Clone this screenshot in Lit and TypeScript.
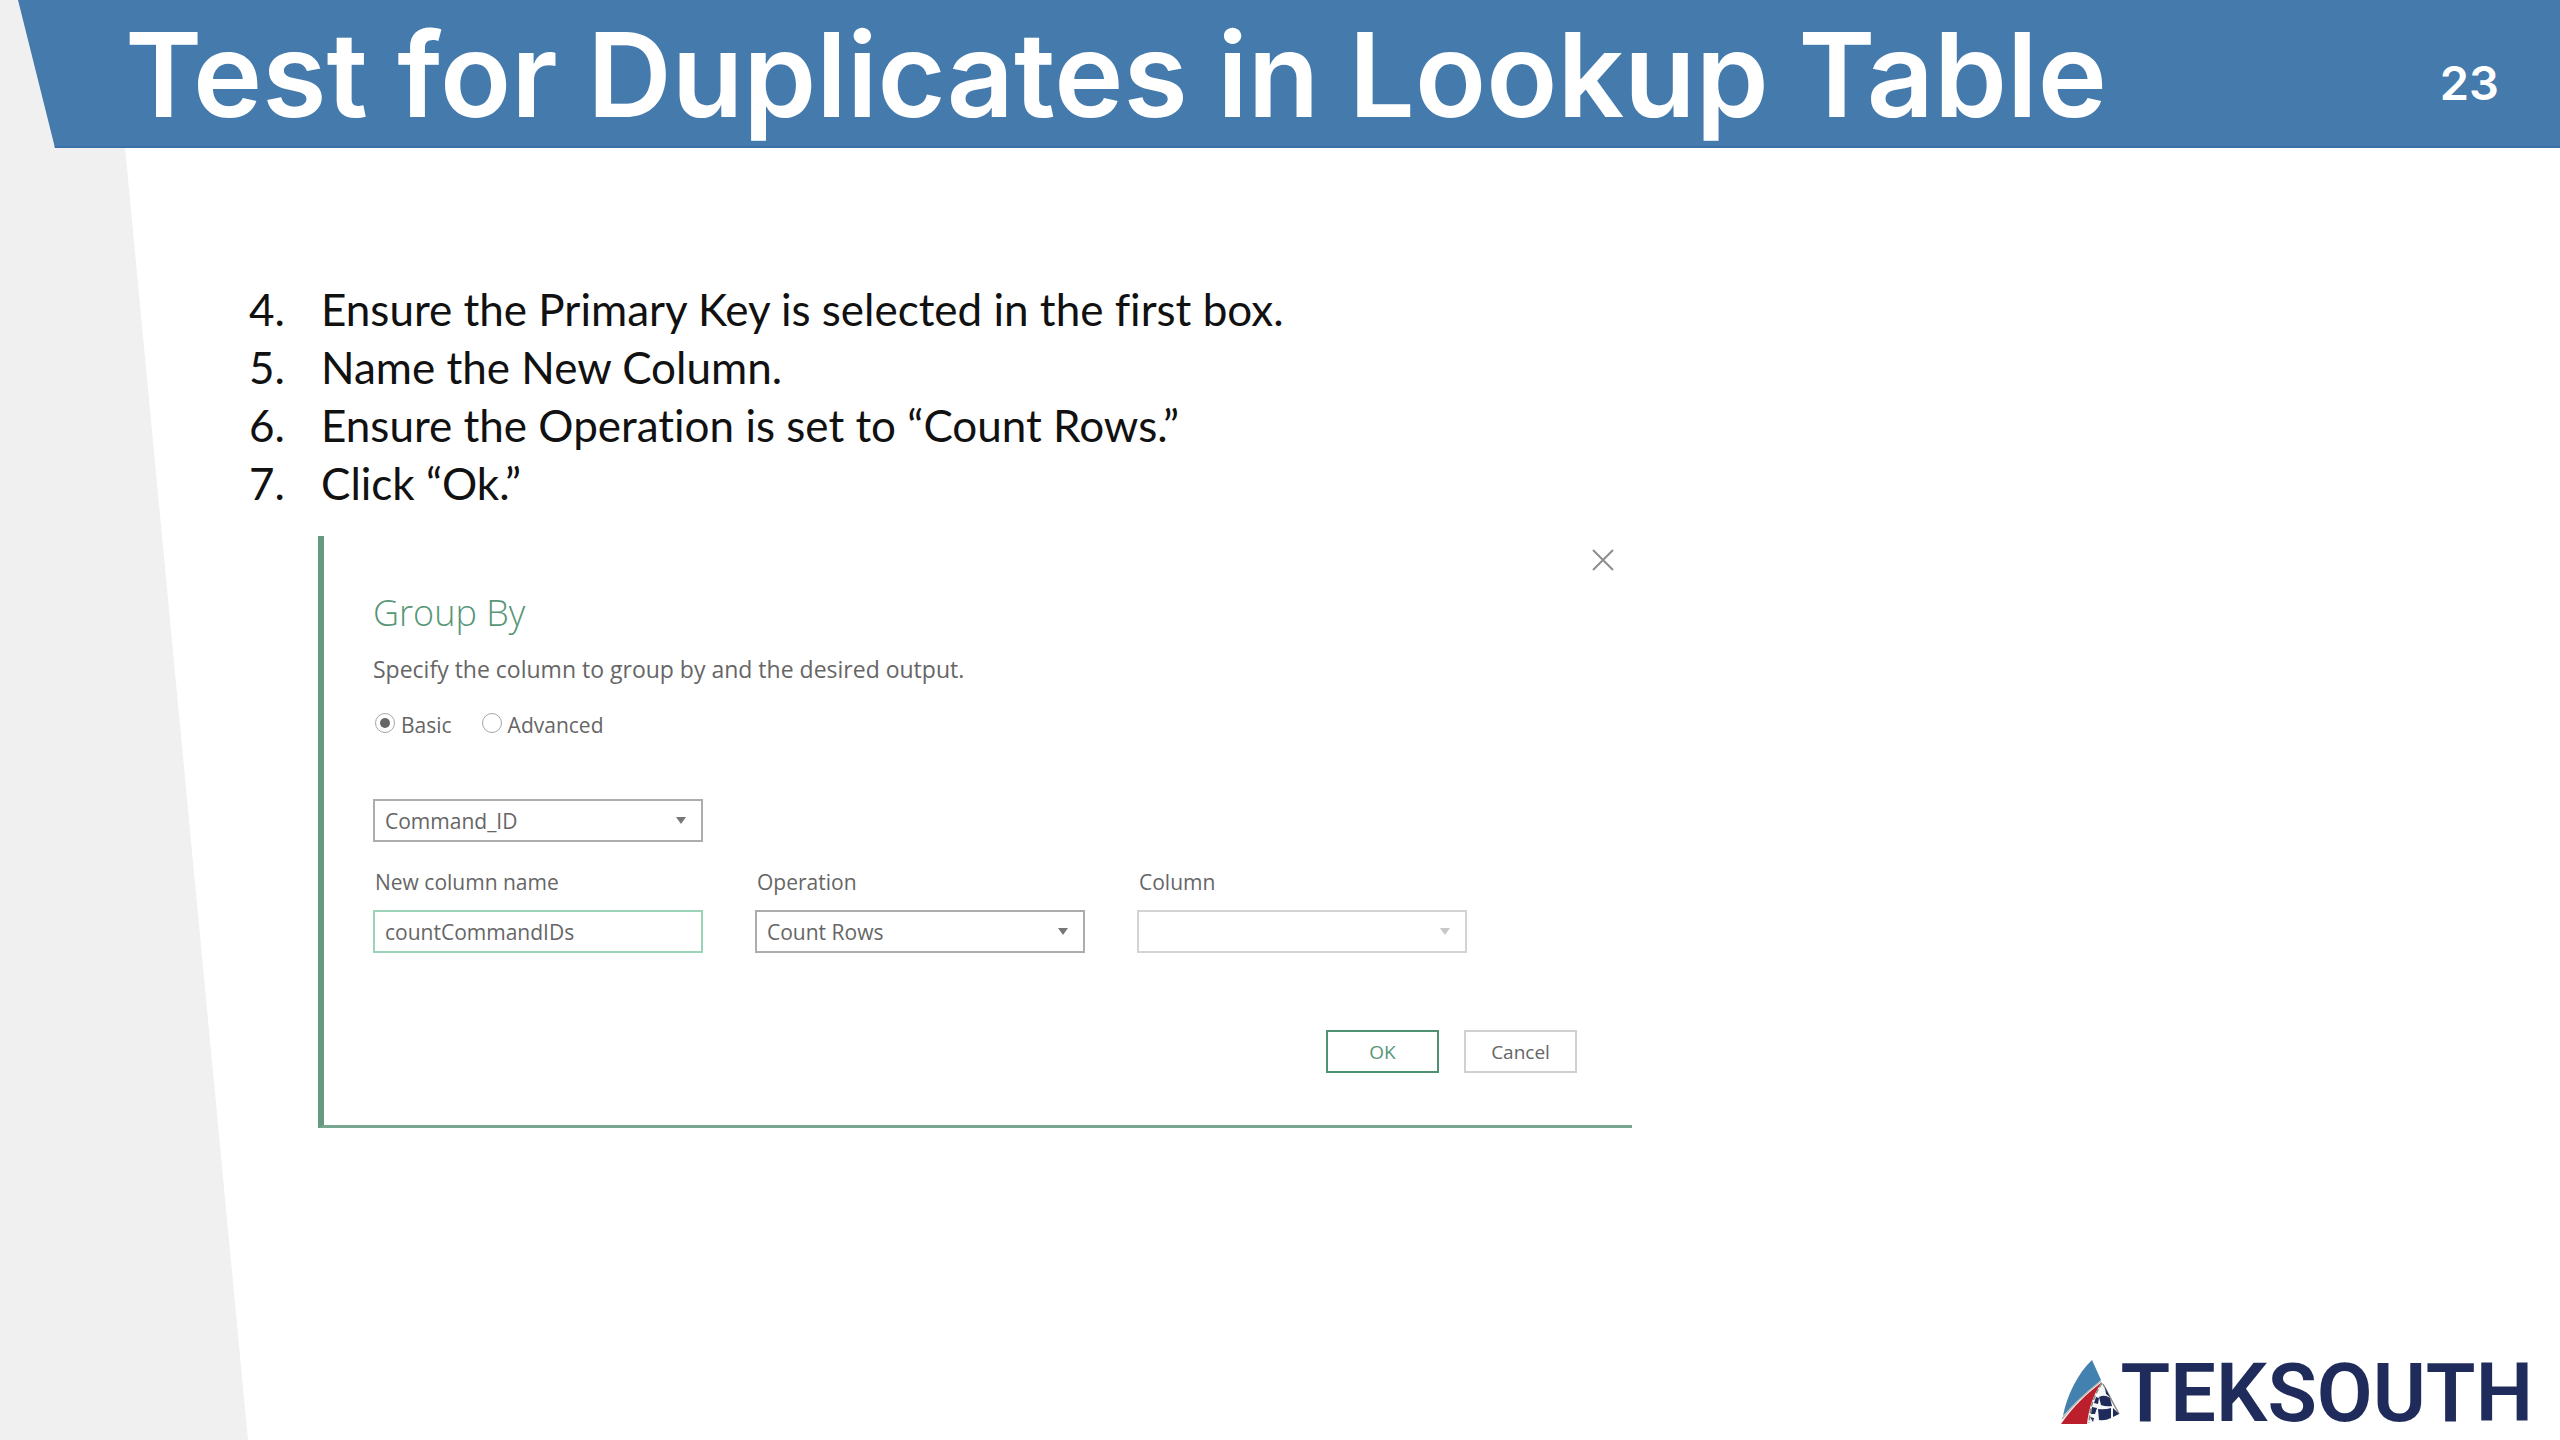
import { LitElement, html, css } from "lit";
import { customElement, property, state } from "lit/decorators.js";

@customElement("teksouth-logo")
export class TeksouthLogo extends LitElement {
  static styles = css`
    :host {
      display: flex;
      align-items: flex-end;
      color: #1f2b5b;
      font-family: Roboto, "Liberation Sans", sans-serif;
    }
    .mark {
      display: block;
      width: 60px;
      height: 66px;
    }
    .word {
      font-size: 81px;
      line-height: 80px;
      font-weight: 600;
      height: 72px;
    }
  `;

  render() {
    return html`
      <svg class="mark" viewBox="0 0 60 66" aria-hidden="true">
        <path d="M31 0 C17 13 6 35 2 56 C14 42 28 31 40 20 Z" fill="#4381b1" />
        <path d="M41 22 C27 33 13 45 0 64 L26 64 C28 48 32 35 41 22 Z" fill="#bb1f2c" />
        <path d="M40 21 C27 31 13 43 1 59" stroke="#b9b6ae" stroke-width="1.5" fill="none" />
        <path d="M42 23 L58 54 L28 63 C29 48 33 36 42 23 Z" fill="#f6f7f9" />
        <path d="M42 24 L58 54" stroke="#8b8a84" stroke-width="1.5" fill="none" />
        <path d="M41 23 C33 35 29 47 28 63" stroke="#8b8a84" stroke-width="1.5" fill="none" stroke-dasharray="5 2" />
        <path d="M38 37 Q44 34 49 38 L51 46 Q45 47 40 45 Z" fill="#1f2b5b" />
        <path d="M44 27 L49 37 L45 34 Z" fill="#1f2b5b" />
        <path d="M37 49 Q44 50 50 48 L50 58 Q44 61 38 60 Z" fill="#1f2b5b" />
        <path d="M52 48 L58 54 L52 57 Z" fill="#1f2b5b" />
        <path d="M31 47 L36 48 L34 54 L30 54 Z" fill="#1f2b5b" />
        <path d="M35 37 L38 38 L37 44 L33 43 Z" fill="#1f2b5b" />
        <path d="M29 57 L33 58 L32 62 Z" fill="#1f2b5b" />
      </svg>
      <span class="word">TEKSOUTH</span>
    `;
  }
}

@customElement("group-by-dialog")
export class GroupByDialog extends LitElement {
  @property() heading = "Group By";
  @state() private mode = "Basic";

  static styles = css`
    :host {
      display: block;
      box-sizing: border-box;
      max-width: 1314px;
      padding: 13px 0 52px 49px;
      border-left: 6px solid #659980;
      border-bottom: 3px solid #78a68f;
      color: #666;
      font-family: "Open Sans", "Noto Sans", sans-serif;
      font-size: 21px;
      line-height: 32px;
    }
    .top {
      display: flex;
      justify-content: flex-end;
      padding-right: 18px;
    }
    .close {
      display: block;
      padding: 0;
      border: 0;
      background: none;
      color: #8c8c8c;
      width: 22px;
      height: 22px;
    }
    .close svg {
      display: block;
    }
    .heading {
      margin: 17px 0 0;
      color: #589678;
      font-size: 36px;
      line-height: 50px;
      font-weight: 300;
    }
    .lead {
      margin: 15px 0 0;
      font-size: 23px;
    }
    .modes {
      display: flex;
      gap: 28px;
      margin: 24px 0 0;
      padding: 0;
      border: 0;
    }
    .mode {
      display: flex;
      gap: 6px;
      align-items: center;
    }
    .radio {
      appearance: none;
      display: grid;
      place-items: center;
      width: 20px;
      height: 20px;
      margin: 0 0 4px 2px;
      border: 1px solid #a6a6a6;
      border-radius: 50%;
    }
    .radio:checked::before {
      content: "";
      width: 10px;
      height: 10px;
      border-radius: 50%;
      background: #666;
    }
    .fields {
      display: grid;
      grid-template-columns: repeat(3, 1fr);
      column-gap: 52px;
      padding-right: 165px;
    }
    .key {
      margin-top: 58px;
    }
    .values {
      margin-top: 24px;
    }
    .field {
      display: flex;
      flex-direction: column;
      gap: 12px;
    }
    .label {
      padding-left: 2px;
    }
    .pick {
      display: grid;
      align-items: center;
    }
    .pick > * {
      grid-area: 1 / 1;
    }
    .arrow {
      justify-self: end;
      margin-right: 16px;
      color: #777;
      pointer-events: none;
    }
    .box {
      box-sizing: border-box;
      width: 100%;
      height: 43px;
      padding: 0 10px;
      border: 2px solid #adadad;
      border-radius: 0;
      background: #fff;
      color: #666;
      font: inherit;
      appearance: none;
      outline: none;
    }
    .box.entry {
      border-color: #9bd3b9;
    }
    .box:disabled {
      border-color: #d3d3d3;
      opacity: 1;
    }
    .box:disabled + .arrow {
      color: #c8c8c8;
    }
    .actions {
      display: flex;
      justify-content: flex-end;
      gap: 25px;
      margin-top: 77px;
      padding-right: 55px;
    }
    .button {
      box-sizing: border-box;
      width: 113px;
      height: 43px;
      padding: 0;
      border: 2px solid #d0d0d0;
      background: #fff;
      color: #666;
      font: inherit;
      font-size: 19px;
    }
    .button.primary {
      border-color: #4f9273;
      color: #589678;
    }
  `;

  private arrow() {
    return html`<svg class="arrow" width="12" height="8" viewBox="0 0 12 8" aria-hidden="true">
      <path d="M1 0 H11 L6 7 Z" fill="currentColor" />
    </svg>`;
  }

  private radio(name: string) {
    return html`<label class="mode">
      <input
        class="radio"
        type="radio"
        name="mode"
        .checked=${this.mode === name}
        @change=${() => (this.mode = name)}
      />${name}
    </label>`;
  }

  render() {
    return html`
      <div class="top">
        <button class="close" type="button" aria-label="Close">
          <svg width="22" height="22" viewBox="0 0 22 22" aria-hidden="true">
            <path d="M1 1 L21 21 M21 1 L1 21" stroke="currentColor" stroke-width="2" />
          </svg>
        </button>
      </div>
      <h2 class="heading">${this.heading}</h2>
      <p class="lead">Specify the column to group by and the desired output.</p>
      <fieldset class="modes" aria-label="Mode">${this.radio("Basic")}${this.radio("Advanced")}</fieldset>
      <div class="fields key">
        <div class="pick">
          <select class="box" aria-label="Group by column">
            <option>Command_ID</option>
          </select>
          ${this.arrow()}
        </div>
      </div>
      <div class="fields values">
        <div class="field">
          <label class="label" for="name">New column name</label>
          <input class="box entry" id="name" type="text" value="countCommandIDs" />
        </div>
        <div class="field">
          <label class="label" for="operation">Operation</label>
          <div class="pick">
            <select class="box" id="operation">
              <option>Count Rows</option>
            </select>
            ${this.arrow()}
          </div>
        </div>
        <div class="field">
          <label class="label" for="column">Column</label>
          <div class="pick">
            <select class="box" id="column" disabled></select>
            ${this.arrow()}
          </div>
        </div>
      </div>
      <div class="actions">
        <button class="button primary" type="button">OK</button>
        <button class="button" type="button">Cancel</button>
      </div>
    `;
  }
}

@customElement("app-root")
export class AppRoot extends LitElement {
  private steps = [
    "Ensure the Primary Key is selected in the first box.",
    "Name the New Column.",
    "Ensure the Operation is set to “Count Rows.”",
    "Click “Ok.”",
  ];

  static styles = css`
    :host {
      display: flex;
      flex-direction: column;
      position: relative;
      min-height: 100vh;
      background: #fff;
    }
    .wedge {
      position: absolute;
      inset: 0 auto 0 0;
      width: 248px;
      background: #f0f0f0;
      clip-path: polygon(0 0, 111px 0, 100% 100%, 0 100%);
    }
    .header {
      position: relative;
      display: flex;
      align-items: center;
      justify-content: space-between;
      box-sizing: border-box;
      height: 148px;
      padding: 4px 61px 0 125px;
      border-bottom: 2px solid #3a6fa8;
      background: #447aac;
      color: #fff;
      font-family: Inter, Roboto, "Liberation Sans", sans-serif;
      clip-path: polygon(18px 0, 100% 0, 100% 100%, 55px 100%);
    }
    .title {
      margin: 0;
      font-size: 117px;
      line-height: 140px;
      font-weight: 600;
    }
    .page {
      padding-top: 16px;
      font-size: 47px;
      line-height: 56px;
      font-weight: 600;
    }
    .main {
      position: relative;
      flex: 1;
      padding: 132px 64px 40px 318px;
    }
    .steps {
      margin: 0 0 24px;
      padding: 0;
      list-style: none;
      counter-reset: step 3;
      color: #111;
      font-family: Lato, "Liberation Sans", sans-serif;
      font-size: 44px;
      line-height: 58px;
      font-variant-ligatures: none;
    }
    .step {
      display: flex;
      counter-increment: step;
    }
    .step::before {
      content: counter(step) ".";
      width: 72px;
      margin-left: -69px;
    }
    .footer {
      position: relative;
      display: flex;
      justify-content: flex-end;
      padding: 0 27px 14px;
    }
  `;

  render() {
    return html`
      <div class="wedge"></div>
      <header class="header">
        <h1 class="title">Test for Duplicates in Lookup Table</h1>
        <span class="page">23</span>
      </header>
      <main class="main">
        <ol class="steps">
          ${this.steps.map((step) => html`<li class="step">${step}</li>`)}
        </ol>
        <group-by-dialog></group-by-dialog>
      </main>
      <footer class="footer"><teksouth-logo></teksouth-logo></footer>
    `;
  }
}
